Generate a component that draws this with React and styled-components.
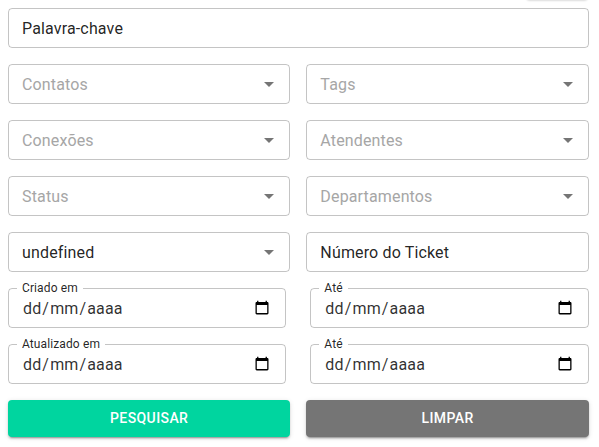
import React from "react";
import styled, { createGlobalStyle } from "styled-components";

const GlobalStyle = createGlobalStyle`
  *, *::before, *::after { box-sizing: border-box; }
  body {
    margin: 0;
    background: #fff;
    color: rgba(0, 0, 0, 0.87);
    font-family: Roboto, sans-serif;
    font-size: 16px;
    overflow: hidden;
  }
`;

const Page = styled.main`
  position: relative;
  width: 599px;
  height: 447px;
  padding: 8px 10.3px 0 8px;
  overflow: hidden;
`;

const TabEdge = styled.div`
  position: absolute;
  top: -10px;
  left: 526px;
  width: 62px;
  height: 10px;
  border-radius: 4px;
  box-shadow: 0 1px 2px rgba(0, 0, 0, 0.14);
`;

const Form = styled.form`
  display: flex;
  flex-direction: column;
  gap: 16px;
`;

const Row = styled.div`
  display: grid;
  grid-template-columns: repeat(${(p) => p.$columns || 2}, minmax(0, 1fr));
  column-gap: ${(p) => p.$gap || 16}px;
`;

const Field = styled.div`
  position: relative;
  display: flex;
  align-items: center;
  justify-content: space-between;
  height: 40px;
  padding: 0 ${(p) => p.$right || 13}px 0 13px;
  border: 1px solid rgba(0, 0, 0, 0.23);
  border-radius: 4px;
`;

const Value = styled.span`
  line-height: 19px;
  letter-spacing: 0.15px;
  color: ${(p) => (p.$muted ? "#a6a6a6" : "rgba(0, 0, 0, 0.87)")};
`;

const FloatingLabel = styled.label`
  position: absolute;
  top: -8px;
  left: 8px;
  padding: 0 5px;
  background: #fff;
  font-size: 12px;
  line-height: 14px;
  letter-spacing: 0.11px;
`;

const DateText = styled.span`
  display: flex;
  line-height: 19px;
  letter-spacing: 0.15px;
  color: rgba(0, 0, 0, 0.82);
`;

const DatePart = styled.span`
  padding: 0 1px;
`;

const Arrow = styled.svg`
  width: 24px;
  height: 24px;
  fill: rgba(0, 0, 0, 0.54);
`;

const Calendar = styled.svg`
  width: 16px;
  height: 16px;
  fill: #000;
`;

const Button = styled.button`
  height: 36.5px;
  padding: 6px 16px;
  border: 0;
  border-radius: 4px;
  background: ${(p) => p.$color};
  color: #fff;
  font: 500 14px/24.5px Roboto, sans-serif;
  letter-spacing: 0.4px;
  text-transform: uppercase;
  box-shadow: 0 3px 1px -2px rgba(0, 0, 0, 0.2),
    0 2px 2px 0 rgba(0, 0, 0, 0.14), 0 1px 5px 0 rgba(0, 0, 0, 0.12);
`;

const Select = ({ children, muted = true }) => (
  <Field $right={8}>
    <Value $muted={muted}>{children}</Value>
    <Arrow viewBox="0 0 24 24">
      <path d="M7 10l5 5 5-5z" />
    </Arrow>
  </Field>
);

const DateField = ({ label }) => (
  <Field $right={15}>
    <FloatingLabel>{label}</FloatingLabel>
    <DateText>
      <DatePart>dd</DatePart>/<DatePart>mm</DatePart>/<DatePart>aaaa</DatePart>
    </DateText>
    <Calendar viewBox="0 0 16 16">
      <path
        fillRule="evenodd"
        d="M3.1 .8h1.3V2h7.2V.8h1.3V2h.3c.8 0 1.3.5 1.3 1.3v9.8c0 .8-.5 1.3-1.3 1.3H2.8c-.8 0-1.3-.5-1.3-1.3V3.3C1.500 2.500 2 2 2.800 2h.3zM2.800 5.100v8h10.400v-8z"
      />
    </Calendar>
  </Field>
);

export default function App() {
  return (
    <Page>
      <GlobalStyle />
      <TabEdge />
      <Form>
        <Row $columns={1}>
          <Field>
            <Value>Palavra-chave</Value>
          </Field>
        </Row>
        <Row>
          <Select>Contatos</Select>
          <Select>Tags</Select>
        </Row>
        <Row>
          <Select>Conexões</Select>
          <Select>Atendentes</Select>
        </Row>
        <Row>
          <Select>Status</Select>
          <Select>Departamentos</Select>
        </Row>
        <Row>
          <Select muted={false}>undefined</Select>
          <Field>
            <Value>Número do Ticket</Value>
          </Field>
        </Row>
        <Row $gap={24}>
          <DateField label="Criado em" />
          <DateField label="Até" />
        </Row>
        <Row $gap={24}>
          <DateField label="Atualizado em" />
          <DateField label="Até" />
        </Row>
        <Row>
          <Button type="button" $color="#00d59f">Pesquisar</Button>
          <Button type="button" $color="#757575">Limpar</Button>
        </Row>
      </Form>
    </Page>
  );
}
